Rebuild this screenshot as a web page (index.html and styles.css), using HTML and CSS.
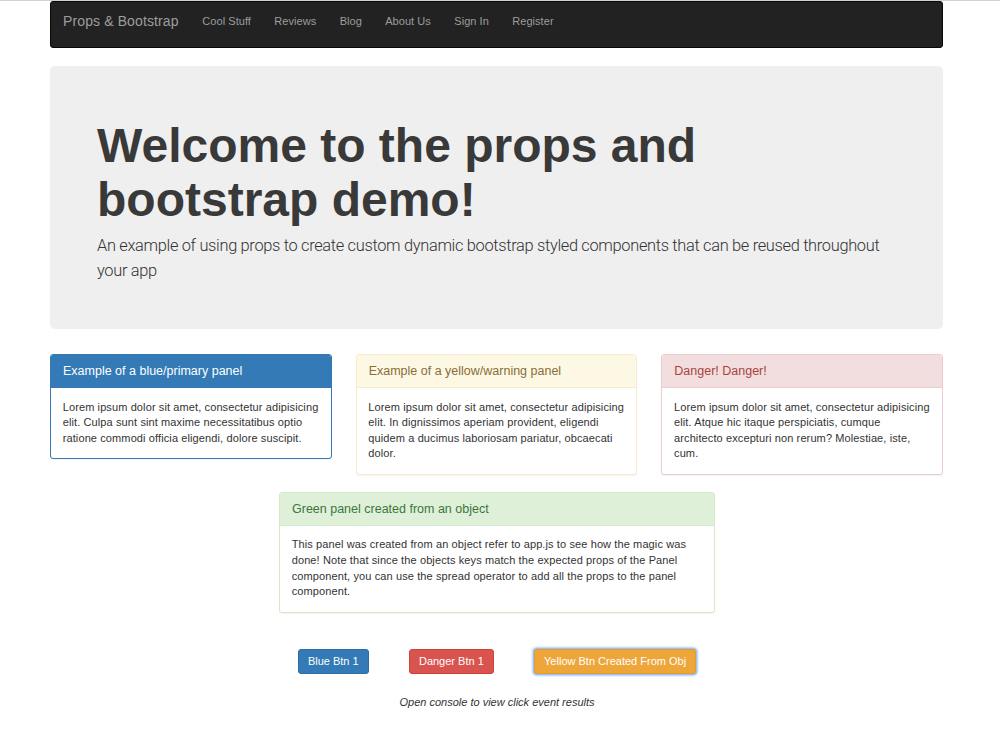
FILE: index.html
```html
<!DOCTYPE html>
<html>
<head>
<meta charset="utf-8">
<title>Props &amp; Bootstrap</title>
<link rel="stylesheet" href="styles.css">
</head>
<body>
<div class="container">
  <nav class="navbar">
    <div class="nav-row">
      <a class="brand" href="#">Props &amp; Bootstrap</a>
      <a class="nav-link" href="#">Cool Stuff</a>
      <a class="nav-link" href="#">Reviews</a>
      <a class="nav-link" href="#">Blog</a>
      <a class="nav-link" href="#">About Us</a>
      <a class="nav-link" href="#">Sign In</a>
      <a class="nav-link" href="#">Register</a>
    </div>
  </nav>

  <div class="jumbotron">
    <h1>Welcome to the props and bootstrap demo!</h1>
    <p>An example of using props to create custom dynamic bootstrap styled components that can be reused throughout your app</p>
  </div>

  <div class="panel-row">
    <div class="panel panel-primary">
      <div class="panel-heading">Example of a blue/primary panel</div>
      <div class="panel-body">Lorem ipsum dolor sit amet, consectetur adipisicing elit. Culpa sunt sint maxime necessitatibus optio ratione commodi officia eligendi, dolore suscipit.</div>
    </div>
    <div class="panel panel-warning">
      <div class="panel-heading">Example of a yellow/warning panel</div>
      <div class="panel-body">Lorem ipsum dolor sit amet, consectetur adipisicing elit. In dignissimos aperiam provident, eligendi quidem a ducimus laboriosam pariatur, obcaecati dolor.</div>
    </div>
    <div class="panel panel-danger">
      <div class="panel-heading">Danger! Danger!</div>
      <div class="panel-body">Lorem ipsum dolor sit amet, consectetur adipisicing elit. Atque hic itaque perspiciatis, cumque architecto excepturi non rerum? Molestiae, iste, cum.</div>
    </div>
  </div>

  <div class="center-row">
    <div class="panel panel-success panel-wide">
      <div class="panel-heading">Green panel created from an object</div>
      <div class="panel-body">This panel was created from an object refer to app.js to see how the magic was done! Note that since the objects keys match the expected props of the Panel component, you can use the spread operator to add all the props to the panel component.</div>
    </div>
  </div>

  <div class="btn-row">
    <button class="btn btn-primary">Blue Btn 1</button>
    <button class="btn btn-danger">Danger Btn 1</button>
    <button class="btn btn-warning btn-focus">Yellow Btn Created From Obj</button>
  </div>

  <p class="note">Open console to view click event results</p>
</div>
</body>
</html>
```

FILE: styles.css
```css
html, body {
  margin: 0;
  padding: 0;
}

body {
  border-top: 1px solid #d2d2d2;
  background: #ffffff;
  color: #333333;
  font-family: "Liberation Sans", Arial, Helvetica, sans-serif;
  font-size: 11px;
  line-height: 15.6px;
}

.container {
  width: 893px;
  margin-left: 50px;
}

/* Navbar */
.navbar {
  background: #222222;
  border: 1px solid #080808;
  border-radius: 3px;
  padding-bottom: 7px;
}

.nav-row {
  display: flex;
  align-items: center;
  height: 38px;
}

.brand {
  color: #9d9d9d;
  font-size: 14px;
  line-height: 20px;
  letter-spacing: 0.12px;
  padding: 0 12px;
  text-decoration: none;
}

.nav-link {
  color: #9d9d9d;
  font-size: 11px;
  line-height: 16px;
  letter-spacing: 0.05px;
  padding: 0 11.7px;
  text-decoration: none;
}

/* Jumbotron */
.jumbotron {
  margin-top: 18px;
  background: #efefef;
  border-radius: 5px;
  padding: 53px 47px 46px 47px;
  height: 263px;
  box-sizing: border-box;
}

.jumbotron h1 {
  margin: 0 0 7px 0;
  font-size: 48px;
  line-height: 54px;
  font-weight: 700;
  color: #393939;
}

.jumbotron p {
  margin: 0;
  font-family: Roboto, "Liberation Sans", Arial, sans-serif;
  font-size: 16.4px;
  line-height: 24.6px;
  font-weight: 300;
  letter-spacing: -0.32px;
  color: #333333;
}

/* Panels */
.panel-row {
  margin-top: 25px;
  display: grid;
  grid-template-columns: repeat(3, 1fr);
  column-gap: 24px;
  align-items: start;
}

.panel {
  background: #ffffff;
  border: 1px solid transparent;
  border-radius: 3px;
  box-shadow: 0 1px 1px rgba(0, 0, 0, 0.05);
  overflow: hidden;
}

.panel-heading {
  padding: 8px 12px;
  font-size: 12.5px;
  line-height: 16px;
  border-bottom: 1px solid transparent;
}

.panel-body {
  padding: 11.7px;
  letter-spacing: 0.11px;
}

.panel-primary {
  border-color: #337ab7;
}
.panel-primary .panel-heading {
  background: #337ab7;
  border-color: #337ab7;
  color: #ffffff;
}

.panel-warning {
  border-color: #faebcc;
}
.panel-warning .panel-heading {
  background: #fcf8e3;
  border-color: #faebcc;
  color: #8a6d3b;
}

.panel-danger {
  border-color: #ebccd1;
}
.panel-danger .panel-heading {
  background: #f2dede;
  border-color: #ebccd1;
  color: #a94442;
}

.panel-success {
  border-color: #d6e9c6;
}
.panel-success .panel-heading {
  background: #dff0d8;
  border-color: #d6e9c6;
  color: #3c763d;
}

.center-row {
  display: flex;
  justify-content: center;
  margin-top: 17px;
}

.panel-wide {
  width: 434px;
  margin-left: 1px;
}

/* Buttons */
.btn-row {
  display: flex;
  justify-content: center;
  gap: 39.5px;
  margin-top: 36px;
  padding-left: 1px;
}

.btn {
  font-family: "Liberation Sans", Arial, Helvetica, sans-serif;
  font-size: 11px;
  line-height: 15px;
  padding: 4px 9.4px;
  border: 1px solid transparent;
  border-radius: 3px;
  color: #ffffff;
  cursor: pointer;
}

.btn-primary {
  background: #337ab7;
  border-color: #2e6da4;
}

.btn-danger {
  background: #d9534f;
  border-color: #d43f3a;
}

.btn-warning {
  background: #eea63a;
  border-color: #e49b2c;
}

.btn-focus {
  box-shadow: 0 0 0 1px #9cc3ee, 0 0 2px 2px rgba(120, 170, 235, 0.55);
}

.note {
  margin: 20px 0 0 0;
  text-align: center;
  font-style: italic;
  font-size: 11px;
  line-height: 16px;
  padding-left: 1px;
}
```
